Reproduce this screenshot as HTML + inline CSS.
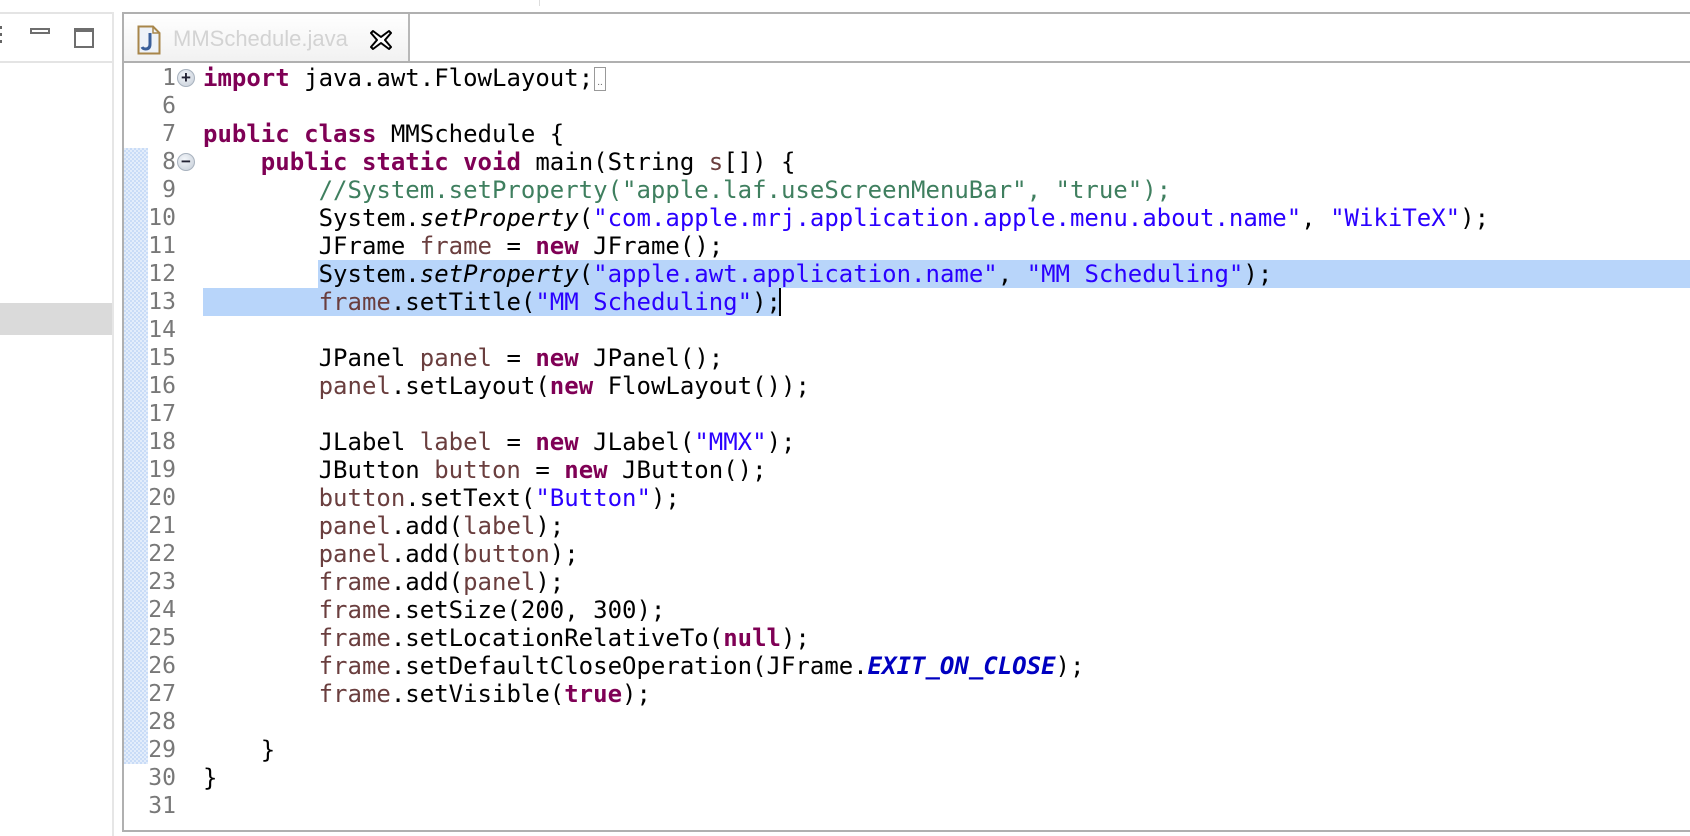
<!DOCTYPE html>
<html><head><meta charset="utf-8"><style>
html,body{margin:0;padding:0;width:1690px;height:836px;background:#fff;overflow:hidden;position:relative}
.abs{position:absolute}
.code{position:absolute;left:203px;font-family:"DejaVu Sans Mono","Liberation Mono",monospace;font-size:24px;letter-spacing:0px;white-space:pre;line-height:28px;height:28px;color:#000}
.ln{position:absolute;width:52px;left:124px;text-align:right;font-family:"DejaVu Sans Mono","Liberation Mono",monospace;font-size:23px;line-height:28px;color:#787878}
.k{color:#7f0055;font-weight:bold}
.s{color:#2a00ff}
.c{color:#3f7f5f}
.v{color:#6a3e3e}
.i{font-style:italic}
.cn{color:#0000c0;font-weight:bold;font-style:italic}
.sel{position:absolute;background:#b8d5fa;height:28px}
.dots{position:absolute;left:124px;width:24px;background-color:#e3edfb;background-image:linear-gradient(45deg,#c9dcf7 25%,transparent 25%,transparent 75%,#c9dcf7 75%),linear-gradient(45deg,#c9dcf7 25%,transparent 25%,transparent 75%,#c9dcf7 75%);background-size:4px 4px;background-position:0 0,2px 2px}
.fold{position:absolute;left:177px;width:18px;height:18px;border-radius:50%;background:radial-gradient(circle at 40% 35%,#f4f7fb,#c4ccd6);border:1px solid #a8b2be;box-sizing:border-box;font-family:"Liberation Sans",sans-serif;font-size:17px;line-height:15px;text-align:center;color:#223;font-weight:bold}
</style></head><body>
<div class="abs" style="left:539px;top:0;width:1px;height:6px;background:#ddd"></div>
<div class="abs" style="left:0;top:12px;width:112px;height:2px;background:#e4e4e4"></div>
<div class="abs" style="left:0;top:61px;width:112px;height:2px;background:#e4e4e4"></div>
<div class="abs" style="left:112px;top:12px;width:2px;height:824px;background:#e6e6e6"></div>
<div class="abs" style="left:0;top:303px;width:112px;height:32px;background:#dadada"></div>
<div class="abs" style="left:0;top:26px;width:2px;height:3px;background:#666"></div>
<div class="abs" style="left:0;top:33px;width:2px;height:3px;background:#666"></div>
<div class="abs" style="left:0;top:40px;width:2px;height:3px;background:#666"></div>
<div class="abs" style="left:30px;top:28px;width:20px;height:6px;border:2px solid #6e6e6e;box-sizing:border-box"></div>
<div class="abs" style="left:74px;top:28px;width:20px;height:20px;border:2px solid #6e6e6e;border-top-width:4px;box-sizing:border-box"></div>
<div class="abs" style="left:122px;top:12px;width:1600px;height:820px;border:2px solid #b0b0b0;box-sizing:border-box"></div>
<div class="abs" style="left:124px;top:14px;width:284px;height:48px;background:linear-gradient(#fff,#f1f1f1)"></div>
<div class="abs" style="left:408px;top:14px;width:2px;height:48px;background:#b8b8b8"></div>
<div class="abs" style="left:122px;top:61px;width:1570px;height:2px;background:#b0b0b0"></div>
<svg class="abs" style="left:137px;top:25px" width="24" height="30" viewBox="0 0 24 30">
<path d="M1.5 1.5 H16 L22.5 8 V28.5 H1.5 Z" fill="#eef2f8" stroke="#a8864a" stroke-width="2"/>
<path d="M16 1.5 V8 H22.5" fill="none" stroke="#a8864a" stroke-width="1.5"/>
<path d="M13 8 V19 Q13 24 8.5 24 Q6 24 5 22" fill="none" stroke="#3a5f9a" stroke-width="3"/>
</svg>
<div class="abs" style="left:173px;top:25px;font-family:'Liberation Sans',sans-serif;font-size:22px;color:#d3d3d3;line-height:28px">MMSchedule.java</div>
<svg class="abs" style="left:369px;top:29px" width="24" height="22" viewBox="0 0 24 22">
<path d="M4 2 L12 8 L20 2 L22 4 L16 11 L22 18 L20 20 L12 14 L4 20 L2 18 L8 11 L2 4 Z" fill="#fff" stroke="#000" stroke-width="2" stroke-linejoin="round"/>
</svg>
<div class="dots" style="top:148px;height:616px"></div>
<div class="sel" style="left:318px;top:260px;width:1400px"></div>
<div class="sel" style="left:203px;top:288px;width:576px"></div>
<div class="abs" style="left:779px;top:288px;width:2px;height:28px;background:#000"></div>
<div class="fold" style="top:69px">+</div>
<div class="fold" style="top:153px;line-height:16px">−</div>
<div class="abs" style="left:594px;top:67px;width:12px;height:24px;border:1.5px solid #999;box-sizing:border-box;font-size:10px;color:#666;font-family:'Liberation Sans';line-height:30px;text-align:center">..</div>

<div class="ln" style="top:64px">1</div><div class="code" style="top:64px"><span class="k">import</span> java.awt.FlowLayout;</div>
<div class="ln" style="top:92px">6</div>
<div class="ln" style="top:120px">7</div><div class="code" style="top:120px"><span class="k">public</span> <span class="k">class</span> MMSchedule {</div>
<div class="ln" style="top:148px">8</div><div class="code" style="top:148px">    <span class="k">public</span> <span class="k">static</span> <span class="k">void</span> main(String <span class="v">s</span>[]) {</div>
<div class="ln" style="top:176px">9</div><div class="code" style="top:176px">        <span class="c">//System.setProperty("apple.laf.useScreenMenuBar", "true");</span></div>
<div class="ln" style="top:204px">10</div><div class="code" style="top:204px">        System.<span class="i">setProperty</span>(<span class="s">"com.apple.mrj.application.apple.menu.about.name"</span>, <span class="s">"WikiTeX"</span>);</div>
<div class="ln" style="top:232px">11</div><div class="code" style="top:232px">        JFrame <span class="v">frame</span> = <span class="k">new</span> JFrame();</div>
<div class="ln" style="top:260px">12</div><div class="code" style="top:260px">        System.<span class="i">setProperty</span>(<span class="s">"apple.awt.application.name"</span>, <span class="s">"MM Scheduling"</span>);</div>
<div class="ln" style="top:288px">13</div><div class="code" style="top:288px">        <span class="v">frame</span>.setTitle(<span class="s">"MM Scheduling"</span>);</div>
<div class="ln" style="top:316px">14</div>
<div class="ln" style="top:344px">15</div><div class="code" style="top:344px">        JPanel <span class="v">panel</span> = <span class="k">new</span> JPanel();</div>
<div class="ln" style="top:372px">16</div><div class="code" style="top:372px">        <span class="v">panel</span>.setLayout(<span class="k">new</span> FlowLayout());</div>
<div class="ln" style="top:400px">17</div>
<div class="ln" style="top:428px">18</div><div class="code" style="top:428px">        JLabel <span class="v">label</span> = <span class="k">new</span> JLabel(<span class="s">"MMX"</span>);</div>
<div class="ln" style="top:456px">19</div><div class="code" style="top:456px">        JButton <span class="v">button</span> = <span class="k">new</span> JButton();</div>
<div class="ln" style="top:484px">20</div><div class="code" style="top:484px">        <span class="v">button</span>.setText(<span class="s">"Button"</span>);</div>
<div class="ln" style="top:512px">21</div><div class="code" style="top:512px">        <span class="v">panel</span>.add(<span class="v">label</span>);</div>
<div class="ln" style="top:540px">22</div><div class="code" style="top:540px">        <span class="v">panel</span>.add(<span class="v">button</span>);</div>
<div class="ln" style="top:568px">23</div><div class="code" style="top:568px">        <span class="v">frame</span>.add(<span class="v">panel</span>);</div>
<div class="ln" style="top:596px">24</div><div class="code" style="top:596px">        <span class="v">frame</span>.setSize(200, 300);</div>
<div class="ln" style="top:624px">25</div><div class="code" style="top:624px">        <span class="v">frame</span>.setLocationRelativeTo(<span class="k">null</span>);</div>
<div class="ln" style="top:652px">26</div><div class="code" style="top:652px">        <span class="v">frame</span>.setDefaultCloseOperation(JFrame.<span class="cn">EXIT_ON_CLOSE</span>);</div>
<div class="ln" style="top:680px">27</div><div class="code" style="top:680px">        <span class="v">frame</span>.setVisible(<span class="k">true</span>);</div>
<div class="ln" style="top:708px">28</div>
<div class="ln" style="top:736px">29</div><div class="code" style="top:736px">    }</div>
<div class="ln" style="top:764px">30</div><div class="code" style="top:764px">}</div>
<div class="ln" style="top:792px">31</div>
</body></html>
